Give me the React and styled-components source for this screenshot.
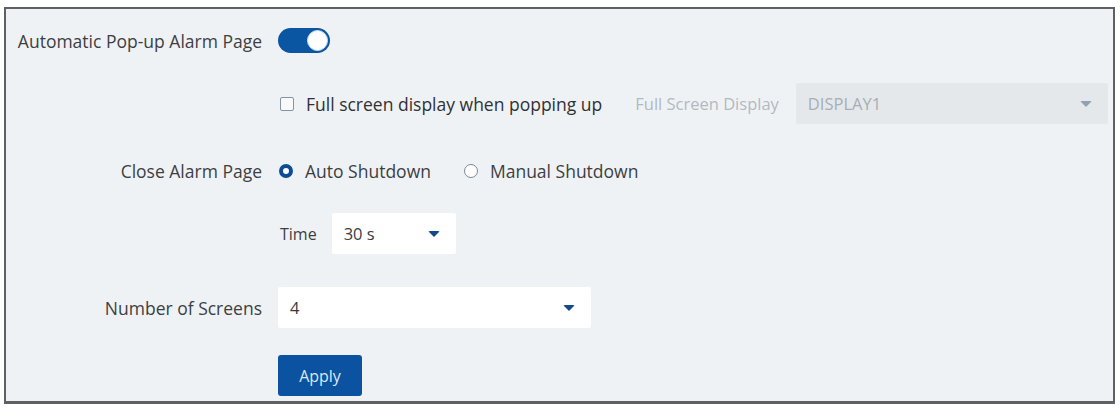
import React from 'react';
import styled, { createGlobalStyle } from 'styled-components';

const GlobalStyle = createGlobalStyle`
  html, body {
    margin: 0;
    padding: 0;
    background: #ffffff;
  }
  body {
    font-family: "Open Sans", "Noto Sans", Arial, sans-serif;
  }
`;

const Page = () => {
  return (
    <Wrapper>
      <GlobalStyle />
      <Panel>
        <Row $top={11}>
          <Label>Automatic Pop-up Alarm Page</Label>
          <Controls>
            <Toggle>
              <Knob />
            </Toggle>
          </Controls>
        </Row>

        <Row $top={22}>
          <Label />
          <Controls>
            <CheckOption>
              <CheckBox />
              <OptionText $strong>Full screen display when popping up</OptionText>
            </CheckOption>
            <MutedLabel>Full Screen Display</MutedLabel>
            <Select $width={312} $disabled>
              <SelectValue $disabled>DISPLAY1</SelectValue>
              <Caret $disabled />
            </Select>
          </Controls>
        </Row>

        <Row $top={26}>
          <Label>Close Alarm Page</Label>
          <Controls $gap={32}>
            <RadioOption>
              <Radio $checked />
              <OptionText>Auto Shutdown</OptionText>
            </RadioOption>
            <RadioOption>
              <Radio />
              <OptionText>Manual Shutdown</OptionText>
            </RadioOption>
          </Controls>
        </Row>

        <Row $top={22}>
          <Label />
          <Controls $gap={15}>
            <InlineLabel>Time</InlineLabel>
            <Select $width={124}>
              <SelectValue>30 s</SelectValue>
              <Caret />
            </Select>
          </Controls>
        </Row>

        <Row $top={33}>
          <Label>Number of Screens</Label>
          <Controls>
            <Select $width={313}>
              <SelectValue>4</SelectValue>
              <Caret />
            </Select>
          </Controls>
        </Row>

        <Row $top={27}>
          <Label />
          <Controls>
            <ApplyButton>Apply</ApplyButton>
          </Controls>
        </Row>
      </Panel>
    </Wrapper>
  );
};

const Wrapper = styled.div`
  padding: 7px 5px 2px 4px;
`;

const Panel = styled.div`
  box-sizing: border-box;
  width: 1111px;
  height: 397px;
  border: 2px solid #5f6063;
  border-bottom-width: 3px;
  background-color: #eff2f5;
  display: flex;
  flex-direction: column;
`;

const Row = styled.div`
  display: grid;
  grid-template-columns: 256px 1fr;
  column-gap: 16px;
  align-items: center;
  height: 41px;
  margin-top: ${(p) => p.$top}px;
`;

const Label = styled.div`
  text-align: right;
  font-size: 17.5px;
  color: #3d3f42;
  white-space: nowrap;
`;

const Controls = styled.div`
  display: flex;
  align-items: center;
  gap: ${(p) => (p.$gap ? p.$gap : 0)}px;
  height: 100%;
`;

const Toggle = styled.div`
  box-sizing: border-box;
  width: 52px;
  height: 25px;
  border-radius: 13px;
  background-color: #0b56a2;
  display: flex;
  align-items: center;
  justify-content: flex-end;
  padding-right: 2px;
`;

const Knob = styled.div`
  box-sizing: border-box;
  width: 21px;
  height: 21px;
  border-radius: 50%;
  background-color: #ffffff;
  border: 1px solid #c9dcf0;
`;

const CheckOption = styled.label`
  display: flex;
  align-items: center;
  gap: 12px;
  margin-right: 33px;
`;

const CheckBox = styled.span`
  box-sizing: border-box;
  display: inline-block;
  width: 14px;
  height: 14px;
  border: 1.5px solid #8593a3;
  border-radius: 2px;
  background-color: #f7f9fb;
  margin-left: 2px;
`;

const OptionText = styled.span`
  font-size: 17.5px;
  color: ${(p) => (p.$strong ? '#2f3134' : '#3d3f42')};
  font-weight: ${(p) => (p.$strong ? 500 : 400)};
  white-space: nowrap;
`;

const MutedLabel = styled.span`
  font-size: 16.5px;
  color: #b3b9bf;
  margin-right: 17px;
  white-space: nowrap;
`;

const InlineLabel = styled.span`
  font-size: 16px;
  color: #3d3f42;
  margin-left: 2px;
`;

const Select = styled.div`
  box-sizing: border-box;
  width: ${(p) => p.$width}px;
  height: 41px;
  display: flex;
  align-items: center;
  justify-content: space-between;
  padding: 0 16px 0 12px;
  background-color: ${(p) => (p.$disabled ? '#e4e8eb' : '#ffffff')};
  border-radius: 2px;
`;

const SelectValue = styled.span`
  font-size: 16.5px;
  color: ${(p) => (p.$disabled ? '#a7aeb5' : '#3a3c3f')};
`;

const Caret = styled.span`
  width: 0;
  height: 0;
  border-left: 6px solid transparent;
  border-right: 6px solid transparent;
  border-top: 6px solid ${(p) => (p.$disabled ? '#8ea2b5' : '#124b8c')};
  border-radius: 2px;
`;

const RadioOption = styled.label`
  display: flex;
  align-items: center;
  gap: 12px;
`;

const Radio = styled.span`
  box-sizing: border-box;
  display: inline-block;
  width: 14px;
  height: 14px;
  border-radius: 50%;
  margin-left: 1px;
  background-color: #ffffff;
  border: ${(p) => (p.$checked ? '4px solid #0b4c97' : '1.2px solid #7a8897')};
`;

const ApplyButton = styled.button`
  box-sizing: border-box;
  width: 84px;
  height: 41px;
  border: none;
  border-radius: 3px;
  background-color: #0b53a0;
  color: #dce8f6;
  font-family: inherit;
  font-size: 16px;
  cursor: pointer;
`;

export default Page;
